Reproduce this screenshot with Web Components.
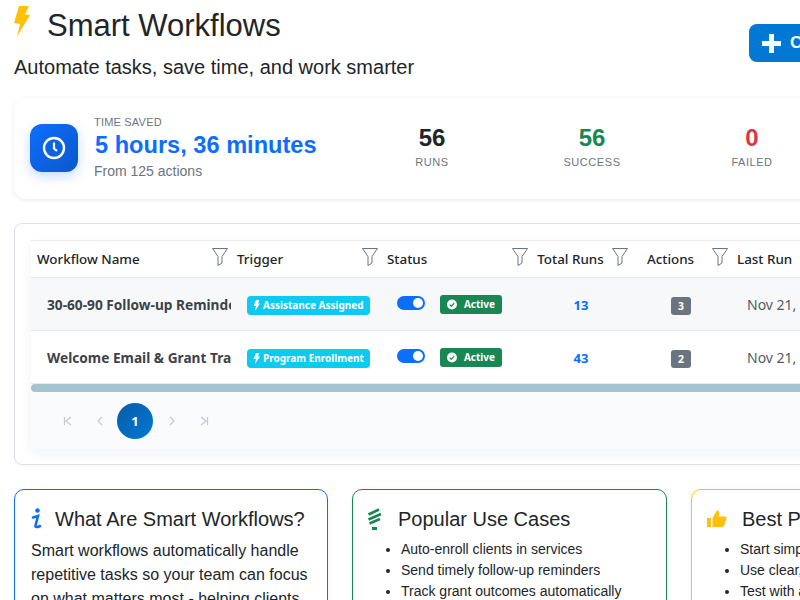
<!DOCTYPE html>
<html><head><meta charset="utf-8">
<style>
html,body{margin:0;padding:0;background:#fff;overflow:hidden;width:800px;height:600px}
body{font-family:"Liberation Sans",Arial,sans-serif;color:#212529}
</style></head><body>
<wf-app></wf-app>
<script>
const def=(name,html)=>{customElements.define(name,class extends HTMLElement{
  constructor(){super();const s=this.attachShadow({mode:'open'});if(typeof html!=='function')s.innerHTML=html;}
  connectedCallback(){ if(typeof html==='function'){this.shadowRoot.innerHTML=html(this);} }
});};
const NS='"Noto Sans",sans-serif';
def('wf-header',`<style>
:host{display:flex;justify-content:space-between;align-items:flex-start;height:98px;width:990px}
h1{margin:0;font:400 31px/39px "Liberation Sans",sans-serif;display:flex;align-items:flex-start;gap:17px;padding-top:6px;color:#212529}
p{margin:10px 0 0;font:20px/24px "Liberation Sans",sans-serif;color:#212529}
button{margin-top:24px;height:38px;width:255px;background:#0078d4;border:0;border-radius:8px;color:#fff;font:700 17px "Liberation Sans",sans-serif;display:flex;align-items:center;gap:9px;padding:0 13px}
</style>
<div><h1><svg width="16" height="31" viewBox="0 0 16 31"><path fill="#ffc107" d="M5 0H15L11 8.5L16 9L3 30.5L6 18L0 17Z"/></svg><span>Smart Workflows</span></h1>
<p>Automate tasks, save time, and work smarter</p></div>
<button><svg width="19" height="19" viewBox="0 0 19 19"><path fill="#fff" d="M7 0h5v7h7v5h-7v7H7v-7H0V7h7z"/></svg><span>Create Workflow</span></button>`);
def('wf-stat',h=>`<style>
:host{display:block;width:160px;text-align:center;margin-top:-4px}
b{display:block;font:700 24px/29px "Liberation Sans",sans-serif;color:${h.getAttribute('color')||'#212529'}}
span{display:block;margin-top:3px;font:400 11px/14px "Liberation Sans",sans-serif;letter-spacing:.55px;color:#6c757d}
</style><b>${h.getAttribute('value')}</b><span>${h.getAttribute('label')}</span>`);
def('wf-stats',`<style>
:host{display:flex;align-items:center;box-sizing:border-box;width:990px;height:101px;background:#fff;border-radius:12px;box-shadow:0 1px 4px rgba(0,0,0,.09);padding:0 16px 2px}
.ic{width:48px;height:48px;border-radius:12px;background:linear-gradient(135deg,#0d6efd,#0a58ca);box-shadow:0 4px 12px rgba(13,110,253,.25);display:flex;align-items:center;justify-content:center;flex:none}
.t{margin-left:16px;width:258px}
.l{font:400 11px/14px "Liberation Sans",sans-serif;letter-spacing:.2px;color:#6c757d}
.v{font:700 23.6px/29px "Liberation Sans",sans-serif;color:#0d6efd;margin:2px 0 3px;white-space:nowrap;padding-left:1px}
.s{font:14px/17px "Liberation Sans",sans-serif;color:#6c757d}
</style>
<div class="ic"><svg width="24" height="24" viewBox="0 0 24 24" fill="none" stroke="#fff"><circle cx="12" cy="12" r="10" stroke-width="2.4"/><path d="M12 6.5V12.5L15 15" stroke-width="2.2"/></svg></div>
<div class="t"><div class="l">TIME SAVED</div><div class="v">5 hours, 36 minutes</div><div class="s">From 125 actions</div></div>
<slot></slot>`);
const G='200px 150px 150px 100px 100px 1fr';
def('wf-filter',`<style>:host{display:block;width:16px;height:18px;flex:none}</style><svg width="16" height="18" viewBox="0 0 16 18" fill="none" stroke="#6c757d" stroke-width="1"><path d="M.5.5h15L10 8.5V15l-4 2.5V8.5z"/></svg>`);
def('wf-th',h=>`<style>
:host{display:flex;align-items:center;padding:0 3px 0 6px;font:500 13.4px/20px ${NS};color:#212529;white-space:nowrap;overflow:hidden}
span{flex:1;${h.hasAttribute('center')?'text-align:center;padding-right:8px;':''}}
wf-filter{margin-top:-4px}
</style><span><slot></slot></span><wf-filter></wf-filter>`);
def('wf-trigger',`<style>
:host{display:inline-flex;align-items:center;gap:3px;height:19px;box-sizing:border-box;padding:0 6px;border-radius:4px;background:#0dcaf0;color:#fff;font:700 10px/19px ${NS};white-space:nowrap}
</style><svg width="7" height="11" viewBox="0 0 7 11"><path fill="#fff" d="M3 0h3.5L5 3.5h2L2 11l1-5H.5z"/></svg><slot></slot>`);
def('wf-toggle',`<style>:host{display:block;width:28px;height:14px;border-radius:7px;background:#0d6efd;position:relative}
i{position:absolute;right:2px;top:2px;width:10px;height:10px;border-radius:50%;background:#fff}</style><i></i>`);
def('wf-active',`<style>
:host{display:inline-flex;align-items:center;gap:7px;height:19px;width:62px;box-sizing:border-box;padding:0 7px;border-radius:3px;background:#198754;color:#fff;font:700 10px/19px ${NS}}
</style><svg width="11" height="11" viewBox="0 0 11 11"><circle cx="5.5" cy="5.5" r="5.5" fill="#fff"/><path d="M3 5.7l1.8 1.8L8 4" fill="none" stroke="#198754" stroke-width="1.3"/></svg>Active`);
def('wf-row',h=>`<style>
:host{display:grid;grid-template-columns:${G};height:53px;box-sizing:border-box;border-bottom:1px solid #e6eaee;align-items:center;background:${h.hasAttribute('alt')?'#f6f8fa':'#fff'}}
.n{padding:2px 0 0 16px;font:700 13.7px/18px ${NS};color:#3d4248;white-space:nowrap;overflow:hidden}
.t{padding:3px 0 0 16px;display:flex}
.st{display:flex;align-items:center;gap:15px;padding-left:16px}
wf-toggle{margin-top:-3px}
wf-active{margin-top:1px}
.r{text-align:center;padding-top:2px;font:700 13px ${NS};color:#0d6efd}
.a{display:flex;justify-content:center;padding-top:3px}
.a span{width:20px;height:18px;border-radius:3px;background:#6c757d;color:#fff;font:700 10.5px/18px ${NS};text-align:center}
.d{padding:1px 0 0 16px;font:14px ${NS};color:#555b61;white-space:nowrap}
</style>
<div class="n">${h.getAttribute('name')}</div><div class="t"><wf-trigger>${h.getAttribute('trigger')}</wf-trigger></div>
<div class="st"><wf-toggle></wf-toggle><wf-active></wf-active></div><div class="r">${h.getAttribute('runs')}</div><div class="a"><span>${h.getAttribute('actions')}</span></div><div class="d">Nov 21, 2024</div>`);
def('wf-pager',`<style>
:host{display:flex;align-items:center;height:57px;box-sizing:border-box;background:#f9fbfd;padding-left:21px;color:#c5c9cd}
.b{width:32px;display:flex;justify-content:center}
.p{width:36px;height:36px;border-radius:50%;background:linear-gradient(135deg,#0a5ca8,#0078d4);color:#fff;font:700 13px/36px ${NS};text-align:center}
svg{fill:none;stroke:#c4c8cc;stroke-width:1.2}
</style>
<div class="b"><svg width="12" height="12" viewBox="0 0 12 12"><path d="M2.5 2v8M9 2L4 6l5 4"/></svg></div>
<div class="b"><svg width="12" height="12" viewBox="0 0 12 12"><path d="M8 2L4 6l4 4"/></svg></div>
<div class="p" style="margin:0 3px 0 1px">1</div>
<div class="b"><svg width="12" height="12" viewBox="0 0 12 12"><path d="M4 2l4 4-4 4"/></svg></div>
<div class="b"><svg width="12" height="12" viewBox="0 0 12 12"><path d="M9.5 2v8M3 2l5 4-5 4"/></svg></div>`);
def('wf-grid',`<style>
:host{display:block;box-sizing:border-box;width:990px;margin-top:24px;height:242px;border:1px solid #dee2e6;border-radius:8px;padding:16px;background:#fff;box-shadow:0 1px 3px rgba(0,0,0,.04)}
.w{box-shadow:0 4px 12px rgba(0,40,80,.06);background:#fff}
.h{display:grid;grid-template-columns:${G};height:38px;box-sizing:border-box;border-top:1px solid #ececec;border-bottom:1px solid #e6eaee;}
.sb{height:8px;border-radius:4px;background:#a6c3d2}
</style><div class="w"><div class="h"><wf-th>Workflow Name</wf-th><wf-th>Trigger</wf-th><wf-th>Status</wf-th><wf-th center>Total Runs</wf-th><wf-th center>Actions</wf-th><wf-th>Last Run</wf-th></div>
<slot></slot><div class="sb"></div><wf-pager></wf-pager></div>`);
def('wf-card',h=>`<style>
:host{display:block;box-sizing:border-box;height:220px;border:1px solid ${h.getAttribute('color')};border-radius:10px;padding:14px 16px;background:#fff;box-shadow:0 2px 8px rgba(0,0,0,.05)}
h3{margin:0 0 5px;display:flex;align-items:center;font:400 20px/30px "Liberation Sans",sans-serif;color:#212529}
.i{width:24px;display:flex;flex:none;margin-right:${h.getAttribute('gap')||0}px}
</style><h3><span class="i"><slot name="icon"></slot></span>${h.getAttribute('title')}</h3><slot></slot>`);
def('wf-p',`<style>:host{display:block;font:16px/24px "Liberation Sans",sans-serif;color:#212529}</style><slot></slot>`);
def('wf-list',h=>`<style>
:host{display:block}
ul{margin:0;padding:0 0 0 32px;font:14px/21px "Liberation Sans",sans-serif;color:#212529}
</style><ul>${h.getAttribute('items').split('|').map(x=>`<li>${x}</li>`).join('')}</ul>`);
def('wf-app',`<style>
:host{display:block;padding:0 14px;width:990px}
.c{display:grid;grid-template-columns:314px 315px 1fr;gap:24px;margin-top:24px}
</style>
<wf-header></wf-header>
<wf-stats><wf-stat value="56" label="RUNS"></wf-stat><wf-stat value="56" label="SUCCESS" color="#198754"></wf-stat><wf-stat value="0" label="FAILED" color="#dc3545"></wf-stat></wf-stats>
<wf-grid>
<wf-row alt name="30-60-90 Follow-up Reminders" trigger="Assistance Assigned" runs="13" actions="3"></wf-row>
<wf-row name="Welcome Email &amp; Grant Tracking" trigger="Program Enrollment" runs="43" actions="2"></wf-row>
</wf-grid>
<div class="c">
<wf-card color="#0d6efd" title="What Are Smart Workflows?"><svg slot="icon" width="12" height="24" viewBox="0 0 12 24"><circle cx="6.5" cy="3.5" r="2.3" fill="#0d6efd"/><path d="M2 10.5 L7 9 L4.5 18.5 C4.2 20 5.5 20.8 9 19" fill="none" stroke="#0d6efd" stroke-width="2.6" stroke-linecap="round"/></svg>
<wf-p>Smart workflows automatically handle repetitive tasks so your team can focus on what matters most - helping clients.</wf-p></wf-card>
<wf-card color="#198754" title="Popular Use Cases" gap="5"><svg slot="icon" width="16" height="24" viewBox="0 0 16 24" style="margin-left:-2px" fill="none" stroke="#198754" stroke-width="2.6"><path d="M1.5 7.5L12 2.5M1.5 12.5L14 7M2.5 16.5L13 12"/><path d="M5 21.5h5" stroke-width="3"/></svg>
<wf-list items="Auto-enroll clients in services|Send timely follow-up reminders|Track grant outcomes automatically"></wf-list></wf-card>
<wf-card color="#ffc107" title="Best Practices" gap="10"><svg slot="icon" width="20" height="20" viewBox="0 0 20 20" style="margin-left:-1px"><path fill="#ffc107" d="M0 9h4v9H0zM5.5 9 L10 1.5c1.8 0 2.8 1.2 2.3 3L11.5 7.5H18c1.2 0 2 1.2 1.5 2.3l-2.5 7c-.3.8-1 1.2-1.8 1.2H5.5z"/></svg>
<wf-list items="Start simple with one trigger|Use clear, descriptive names|Test with a small group first"></wf-list></wf-card>
</div>`);
</script>
</body></html>
